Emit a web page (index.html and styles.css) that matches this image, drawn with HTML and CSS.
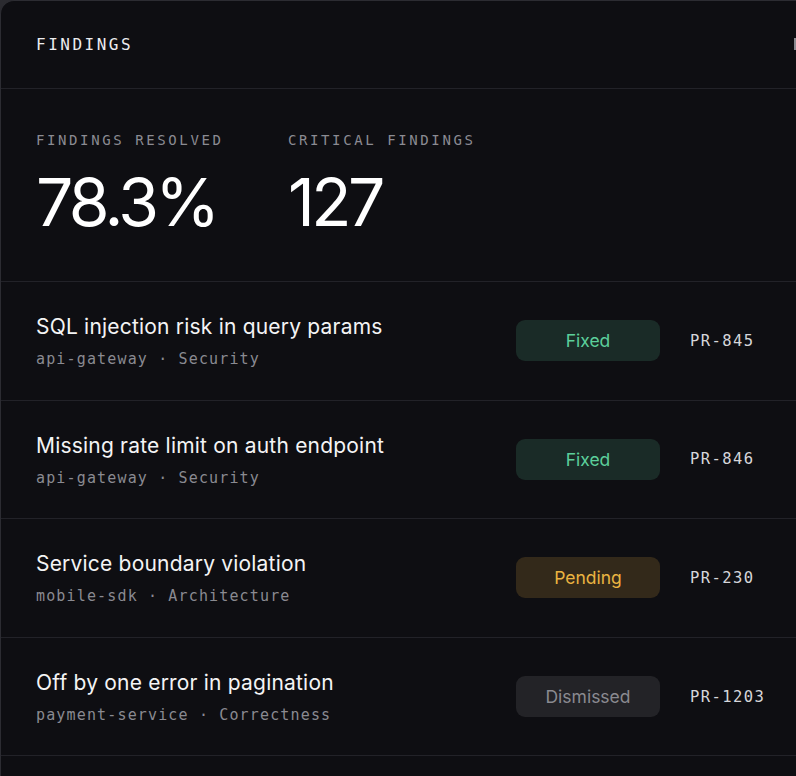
FILE: index.html
```html
<!DOCTYPE html>
<html lang="en">
<head>
<meta charset="utf-8">
<title>Findings</title>
<link rel="stylesheet" href="styles.css">
</head>
<body>
<section class="card">
  <header class="head">
    <h1 class="title">FINDINGS</h1>
    <span class="head-tab"></span>
  </header>

  <div class="stats">
    <div class="stat">
      <div class="stat-label">FINDINGS RESOLVED</div>
      <div class="stat-value">78.3%</div>
    </div>
    <div class="stat">
      <div class="stat-label">CRITICAL FINDINGS</div>
      <div class="stat-value">127</div>
    </div>
  </div>

  <ul class="list">
    <li class="row">
      <div class="info">
        <div class="name">SQL injection risk in query params</div>
        <div class="meta">api-gateway · Security</div>
      </div>
      <span class="badge badge-fixed">Fixed</span>
      <span class="pr">PR-845</span>
    </li>
    <li class="row">
      <div class="info">
        <div class="name">Missing rate limit on auth endpoint</div>
        <div class="meta">api-gateway · Security</div>
      </div>
      <span class="badge badge-fixed">Fixed</span>
      <span class="pr">PR-846</span>
    </li>
    <li class="row">
      <div class="info">
        <div class="name">Service boundary violation</div>
        <div class="meta">mobile-sdk · Architecture</div>
      </div>
      <span class="badge badge-pending">Pending</span>
      <span class="pr">PR-230</span>
    </li>
    <li class="row">
      <div class="info">
        <div class="name">Off by one error in pagination</div>
        <div class="meta">payment-service · Correctness</div>
      </div>
      <span class="badge badge-dismissed">Dismissed</span>
      <span class="pr">PR-1203</span>
    </li>
    <li class="row row-empty"></li>
  </ul>
</section>
</body>
</html>
```

FILE: styles.css
```css
* {
  box-sizing: border-box;
}

html, body {
  margin: 0;
  padding: 0;
  height: 100%;
}

body {
  background: #2b2b30;
  overflow: hidden;
  font-family: Inter, "Noto Sans", sans-serif;
  color: #f4f4f5;
}

.card {
  width: 830px;
  min-height: 900px;
  background: #0e0e12;
  border-top: 1px solid #2c2c32;
  border-left: 1px solid #2c2c32;
  border-top-left-radius: 14px;
}

.head {
  height: 88px;
  padding: 0 35px;
  display: flex;
  align-items: center;
  justify-content: space-between;
  border-bottom: 1px solid #222228;
}

.title {
  margin: 0;
  font-family: "DejaVu Sans Mono", monospace;
  font-size: 16px;
  font-weight: 400;
  letter-spacing: 2.5px;
  color: #ececef;
}

/* edge of the next panel tab peeking in from the right */
.head-tab {
  width: 10px;
  height: 12px;
  background: #3a3a40;
  border-left: 2px solid #8a8a90;
  margin-right: -9px;
  margin-top: -1px;
}

.stats {
  display: flex;
  padding: 41px 35px 44px;
  border-bottom: 1px solid #222228;
}

.stat {
  width: 252px;
}

.stat-label {
  font-family: "DejaVu Sans Mono", monospace;
  font-size: 14px;
  line-height: 20px;
  letter-spacing: 2.6px;
  color: #8b8b92;
}

.stat-value {
  margin-top: 17px;
  font-size: 66px;
  line-height: 70px;
  font-weight: 400;
  letter-spacing: -3.6px;
  color: #ffffff;
}

.list {
  list-style: none;
  margin: 0;
  padding: 0;
}

.row {
  height: 118.6px;
  display: flex;
  align-items: center;
  padding: 0 36px 0 35px;
  border-bottom: 1px solid #222228;
}

.info {
  flex: 1;
  display: flex;
  flex-direction: column;
  gap: 9px;
  padding-top: 2px;
}

.name {
  font-size: 21px;
  line-height: 26px;
  letter-spacing: 0.2px;
  color: #f4f4f5;
}

.meta {
  font-family: "DejaVu Sans Mono", monospace;
  font-size: 15px;
  line-height: 20px;
  letter-spacing: 1.15px;
  color: #8a8a91;
}

.badge {
  width: 144px;
  height: 41px;
  border-radius: 9px;
  display: flex;
  align-items: center;
  justify-content: center;
  font-size: 17.5px;
}

.badge-fixed {
  background: #1a2b27;
  color: #5ccf9b;
}

.badge-pending {
  background: #33291a;
  color: #ebb441;
}

.badge-dismissed {
  background: #232327;
  color: #8a8a90;
}

.pr {
  width: 104px;
  margin-left: 30px;
  font-family: "DejaVu Sans Mono", monospace;
  font-size: 15.5px;
  letter-spacing: 1.4px;
  color: #d6d6da;
}
```
